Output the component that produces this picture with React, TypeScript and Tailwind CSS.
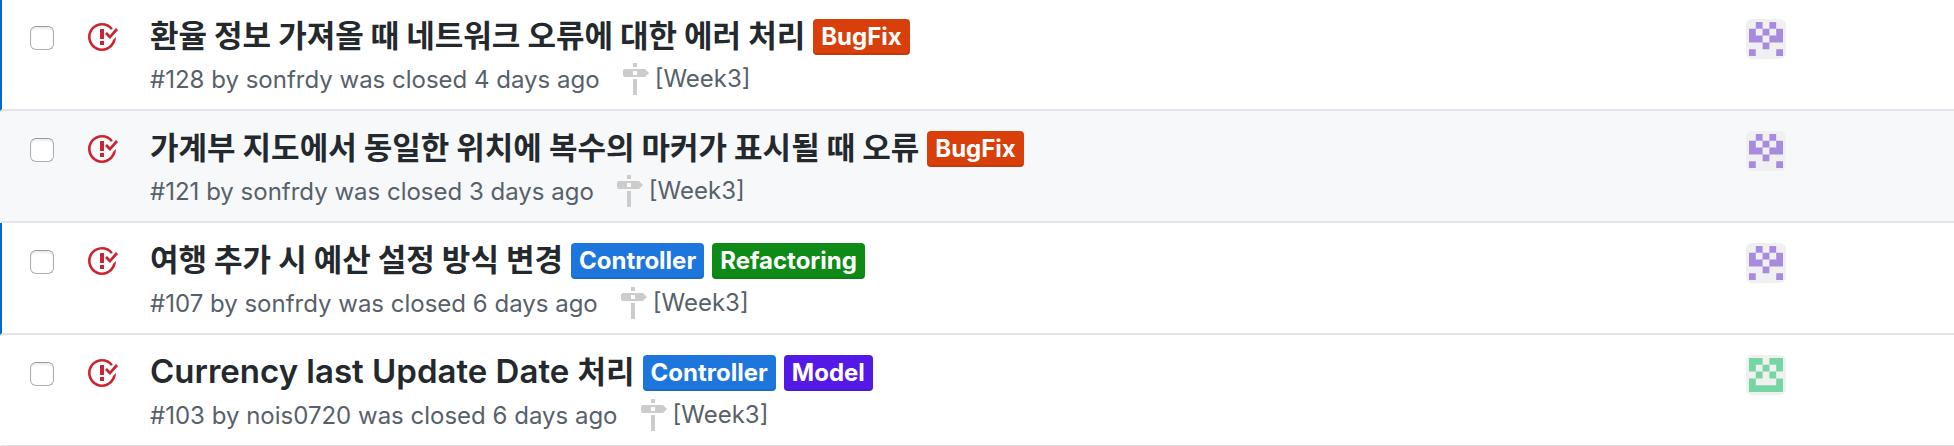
type Label = { name: string; className: string };
type Issue = {
  id: number;
  latin?: string;
  title: string;
  author: string;
  age: string;
  labels: Label[];
  className: string;
  avatar: 'purple' | 'green';
};

const bugFix: Label = { name: 'BugFix', className: 'bg-[#d93f0b]' };
const controller: Label = { name: 'Controller', className: 'bg-[#1d76db]' };
const refactoring: Label = { name: 'Refactoring', className: 'bg-[#0e8a16]' };
const model: Label = { name: 'Model', className: 'bg-[#5319e7]' };

const issues: Issue[] = [
  { id: 128, title: '환율 정보 가져올 때 네트워크 오류에 대한 에러 처리', author: 'sonfrdy', age: '4 days ago', labels: [bugFix], className: 'border-l-[#0366d6] bg-white pt-[15px] border-b-2', avatar: 'purple' },
  { id: 121, title: '가계부 지도에서 동일한 위치에 복수의 마커가 표시될 때 오류', author: 'sonfrdy', age: '3 days ago', labels: [bugFix], className: 'border-l-[#f6f8fa] bg-[#f6f8fa] pt-4 border-b-2', avatar: 'purple' },
  { id: 107, title: '여행 추가 시 예산 설정 방식 변경', author: 'sonfrdy', age: '6 days ago', labels: [controller, refactoring], className: 'border-l-[#0366d6] bg-white pt-4 border-b-2', avatar: 'purple' },
  { id: 103, latin: 'Currency last Update Date ', title: '처리', author: 'nois0720', age: '6 days ago', labels: [controller, model], className: 'border-l-white bg-white pt-4 border-b', avatar: 'green' },
];

const avatars = {
  purple: { color: '#a78bdf', rows: ['01010', '10101', '11011', '00100', '10001'] },
  green: { color: '#76d6a3', rows: ['11011', '10101', '01010', '10001', '11111'] },
};

function Avatar({ kind }: { kind: 'purple' | 'green' }) {
  const { color, rows } = avatars[kind];
  const path = rows
    .flatMap((row, y) => row.split('').map((cell, x) => (cell === '1' ? `M${15 + x * 34} ${15 + y * 34}h34v34h-34z` : '')))
    .join('');
  return (
    <svg viewBox="0 0 200 200" className="size-10 rounded-md bg-[#f0f0f0]" fill={color} aria-hidden="true">
      <path d={path} />
    </svg>
  );
}

function ClosedIcon() {
  return (
    <svg viewBox="0 0 16 16" className="size-8" fill="#cb2431" aria-hidden="true">
      <path d="M7 10h2v2H7v-2zm2-6H7v5h2V4zm1.5 1.5l-1 1L12 9l4-4.5-1-1L12 7l-1.5-1.5zM8 13.7A5.71 5.71 0 0 1 2.3 8c0-3.14 2.56-5.7 5.7-5.7 1.83 0 3.45.88 4.5 2.2l.92-.92A6.947 6.947 0 0 0 8 1C4.14 1 1 4.14 1 8s3.14 7 7 7 7-3.14 7-7l-1.52 1.52c-.66 2.41-2.86 4.19-5.48 4.19v-.01z" />
    </svg>
  );
}

function MilestoneIcon() {
  return (
    <svg viewBox="0 0 14 16" className="h-8 w-7" fill="#cccccc" aria-hidden="true">
      <path d="M8 2H6V0h2v2zm4 5H2c-.55 0-1-.45-1-1V4c0-.55.45-1 1-1h10l2 2-2 2zM8 4H6v2h2V4zM6 16h2V8H6v8z" />
    </svg>
  );
}

function IssueRow({ issue }: { issue: Issue }) {
  return (
    <li className={`flex items-start border-b-[#e1e4e8] border-l-2 pb-[13px] ${issue.className}`}>
      <input
        type="checkbox"
        aria-label={`Select issue ${issue.id}`}
        className="mt-[11px] ml-7 size-6 shrink-0 appearance-none rounded-md border border-[#adadad] border-t-[#999999] bg-white shadow-[inset_0_2px_2px_#ececec] checked:bg-[#0366d6]"
      />
      <span className="mt-[6px] ml-8 shrink-0">
        <ClosedIcon />
      </span>
      <div className="ml-8 min-w-0 flex-1">
        <div className="flex flex-wrap items-end gap-2">
          <a
            href="#issue"
            className="pb-[2px] font-['Noto_Sans_CJK_KR',sans-serif] text-[31px] leading-[38px] font-semibold text-[#24292e]"
          >
            {issue.latin && <span className="font-['Inter',sans-serif] text-[33px] leading-none">{issue.latin}</span>}
            {issue.title}
          </a>
          {issue.labels.map((label) => (
            <a
              key={label.name}
              href="#label"
              className={`rounded-sm px-2 py-[3px] text-[24px] leading-[30px] font-bold text-white shadow-[inset_0_-2px_0_rgba(27,31,35,0.12)] ${label.className}`}
            >
              {label.name}
            </a>
          ))}
        </div>
        <div className="mt-2 flex items-start text-[24px] leading-8 text-[#586069]">
          <span className="mt-px">
            #{issue.id} by <a href="#author">{issue.author}</a> was closed {issue.age}
          </span>
          <a href="#milestone" className="ml-[21px] flex gap-[6px]">
            <MilestoneIcon />
            [Week3]
          </a>
        </div>
      </div>
      <a href="#assignee" aria-label="Assignee" className="mt-1 mr-42 shrink-0">
        <Avatar kind={issue.avatar} />
      </a>
    </li>
  );
}

export default function App() {
  return (
    <ul className="bg-white font-['Inter','Noto_Sans_CJK_KR',sans-serif]">
      {issues.map((issue) => (
        <IssueRow key={issue.id} issue={issue} />
      ))}
    </ul>
  );
}
